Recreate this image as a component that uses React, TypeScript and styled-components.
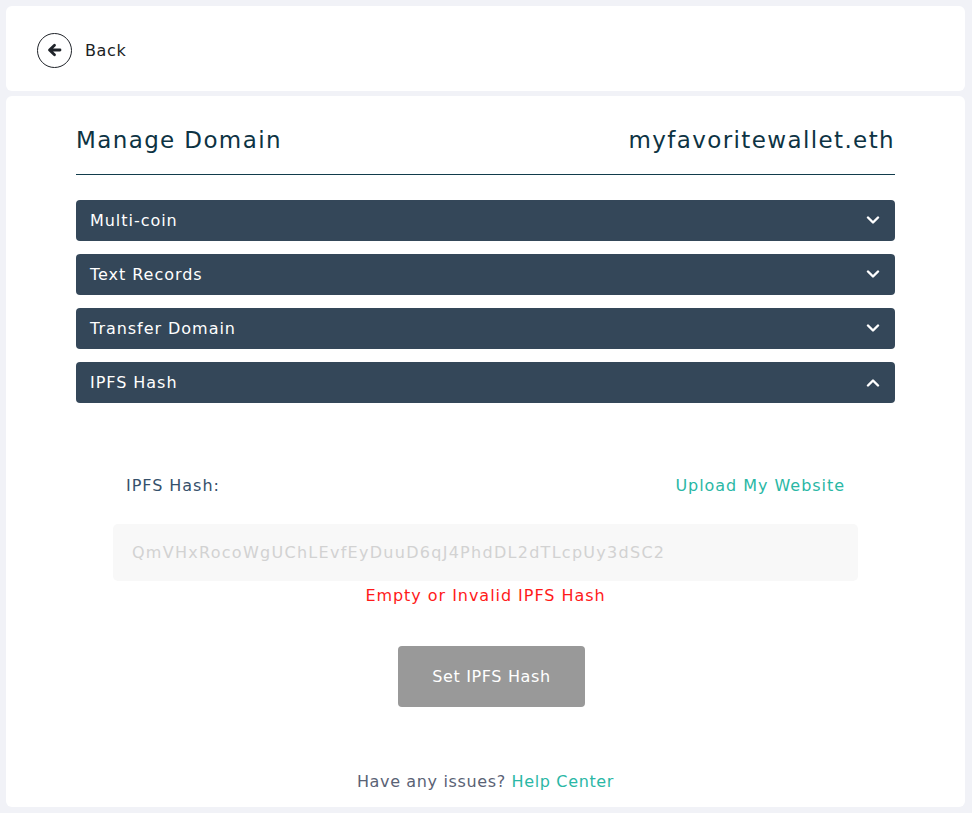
import React from 'react';
import styled, { createGlobalStyle } from 'styled-components';

const GlobalStyle = createGlobalStyle`
  html, body {
    margin: 0;
    padding: 0;
    background: #f1f2f7;
    font-family: "DejaVu Sans", "Noto Sans", sans-serif;
    letter-spacing: 0.06em;
  }
`
const Page = styled.div`
  padding: 6px 7px 6px 6px;
  display: flex;
  flex-direction: column;
  gap: 5px;
  min-height: 813px;
  box-sizing: border-box;
`
const TopBar = styled.div`
  background: #ffffff;
  border-radius: 6px;
  height: 85px;
  display: flex;
  align-items: center;
  padding: 3px 0 0 31px;
  box-sizing: border-box;
  gap: 13px;
`
const BackCircle = styled.div`
  width: 33px;
  height: 33px;
  border: 1.3px solid #1f2329;
  border-radius: 50%;
  display: flex;
  align-items: center;
  justify-content: center;
`
const BackLabel = styled.span`
  font-size: 16px;
  letter-spacing: 0.04em;
  color: #1b1e24;
`
const Card = styled.div`
  background: #ffffff;
  border-radius: 6px;
  flex: 1;
  padding: 26px 70px 0;
  display: flex;
  flex-direction: column;
`
const TitleRow = styled.div`
  display: flex;
  justify-content: space-between;
  align-items: flex-start;
  height: 53px;
  box-sizing: border-box;
  line-height: 36px;
  border-bottom: 1.5px solid #123c4c;
  color: #0d3343;
  font-size: 23px;
  letter-spacing: 0.06em;
  margin-bottom: 25px;
`
const AccordionList = styled.div`
  display: flex;
  flex-direction: column;
  gap: 13px;
`
const AccordionHeader = styled.div`
  background: #344759;
  color: #ffffff;
  height: 41px;
  border-radius: 4px;
  display: flex;
  align-items: center;
  justify-content: space-between;
  padding: 0 15px 0 14px;
  font-size: 16px;
`
const Panel = styled.div`
  padding: 73px 37px 0;
  display: flex;
  flex-direction: column;
`
const LabelRow = styled.div`
  display: flex;
  justify-content: space-between;
  padding: 0 13px;
  font-size: 16px;
  margin-bottom: 29px;
`
const FieldLabel = styled.span`
  color: #35506b;
`
const Link = styled.span`
  color: #2ab7a5;
`
const HashInput = styled.input`
  height: 57px;
  box-sizing: border-box;
  border: none;
  border-radius: 5px;
  background: #f8f8f8;
  padding: 0 19px;
  font-family: inherit;
  font-size: 16px;
  letter-spacing: 0.08em;
  outline: none;
  &::placeholder {
    color: #d2d2d2;
  }
`
const ErrorText = styled.div`
  color: #ff1a1a;
  font-size: 16px;
  text-align: center;
  margin-top: 5px;
`
const SubmitButton = styled.button`
  align-self: center;
  margin: 41px 0 0 12px;
  width: 187px;
  height: 61px;
  border: none;
  border-radius: 4px;
  background: #999999;
  color: #ffffff;
  font-family: inherit;
  font-size: 16px;
  letter-spacing: 0.04em;
`
const Footer = styled.div`
  margin-top: auto;
  padding-bottom: 16px;
  text-align: center;
  font-size: 16px;
  letter-spacing: 0.04em;
  color: #5a6275;
`

function Chevron({ up }: { up?: boolean }) {
  return (
    <svg width="14" height="9" viewBox="0 0 14 9">
      <path
        d={up ? 'M2 7.5 7 2.5 12 7.5' : 'M2 1.5 7 6.5 12 1.5'}
        fill="none"
        stroke="#ffffff"
        strokeWidth="2.4"
        strokeLinecap="round"
        strokeLinejoin="round"
      />
    </svg>
  );
}

const sections = ['Multi-coin', 'Text Records', 'Transfer Domain', 'IPFS Hash'];

function App() {
  return (
    <>
      <GlobalStyle />
      <Page>
        <TopBar>
          <BackCircle>
            <svg width="15" height="14" viewBox="0 0 15 14">
              <path d="M13 7H3M7.5 2.2 2.5 7l5 4.8" fill="none" stroke="#1f2329" strokeWidth="2.8" strokeLinecap="round" strokeLinejoin="round" />
            </svg>
          </BackCircle>
          <BackLabel>Back</BackLabel>
        </TopBar>
        <Card>
          <TitleRow>
            <span>Manage Domain</span>
            <span>myfavoritewallet.eth</span>
          </TitleRow>
          <AccordionList>
            {sections.map((s, i) => (
              <AccordionHeader key={s}>
                {s}
                <Chevron up={i === sections.length - 1} />
              </AccordionHeader>
            ))}
          </AccordionList>
          <Panel>
            <LabelRow>
              <FieldLabel>IPFS Hash:</FieldLabel>
              <Link>Upload My Website</Link>
            </LabelRow>
            <HashInput placeholder="QmVHxRocoWgUChLEvfEyDuuD6qJ4PhdDL2dTLcpUy3dSC2" />
            <ErrorText>Empty or Invalid IPFS Hash</ErrorText>
            <SubmitButton>Set IPFS Hash</SubmitButton>
          </Panel>
          <Footer>
            Have any issues? <Link>Help Center</Link>
          </Footer>
        </Card>
      </Page>
    </>
  );
}

export default App;
